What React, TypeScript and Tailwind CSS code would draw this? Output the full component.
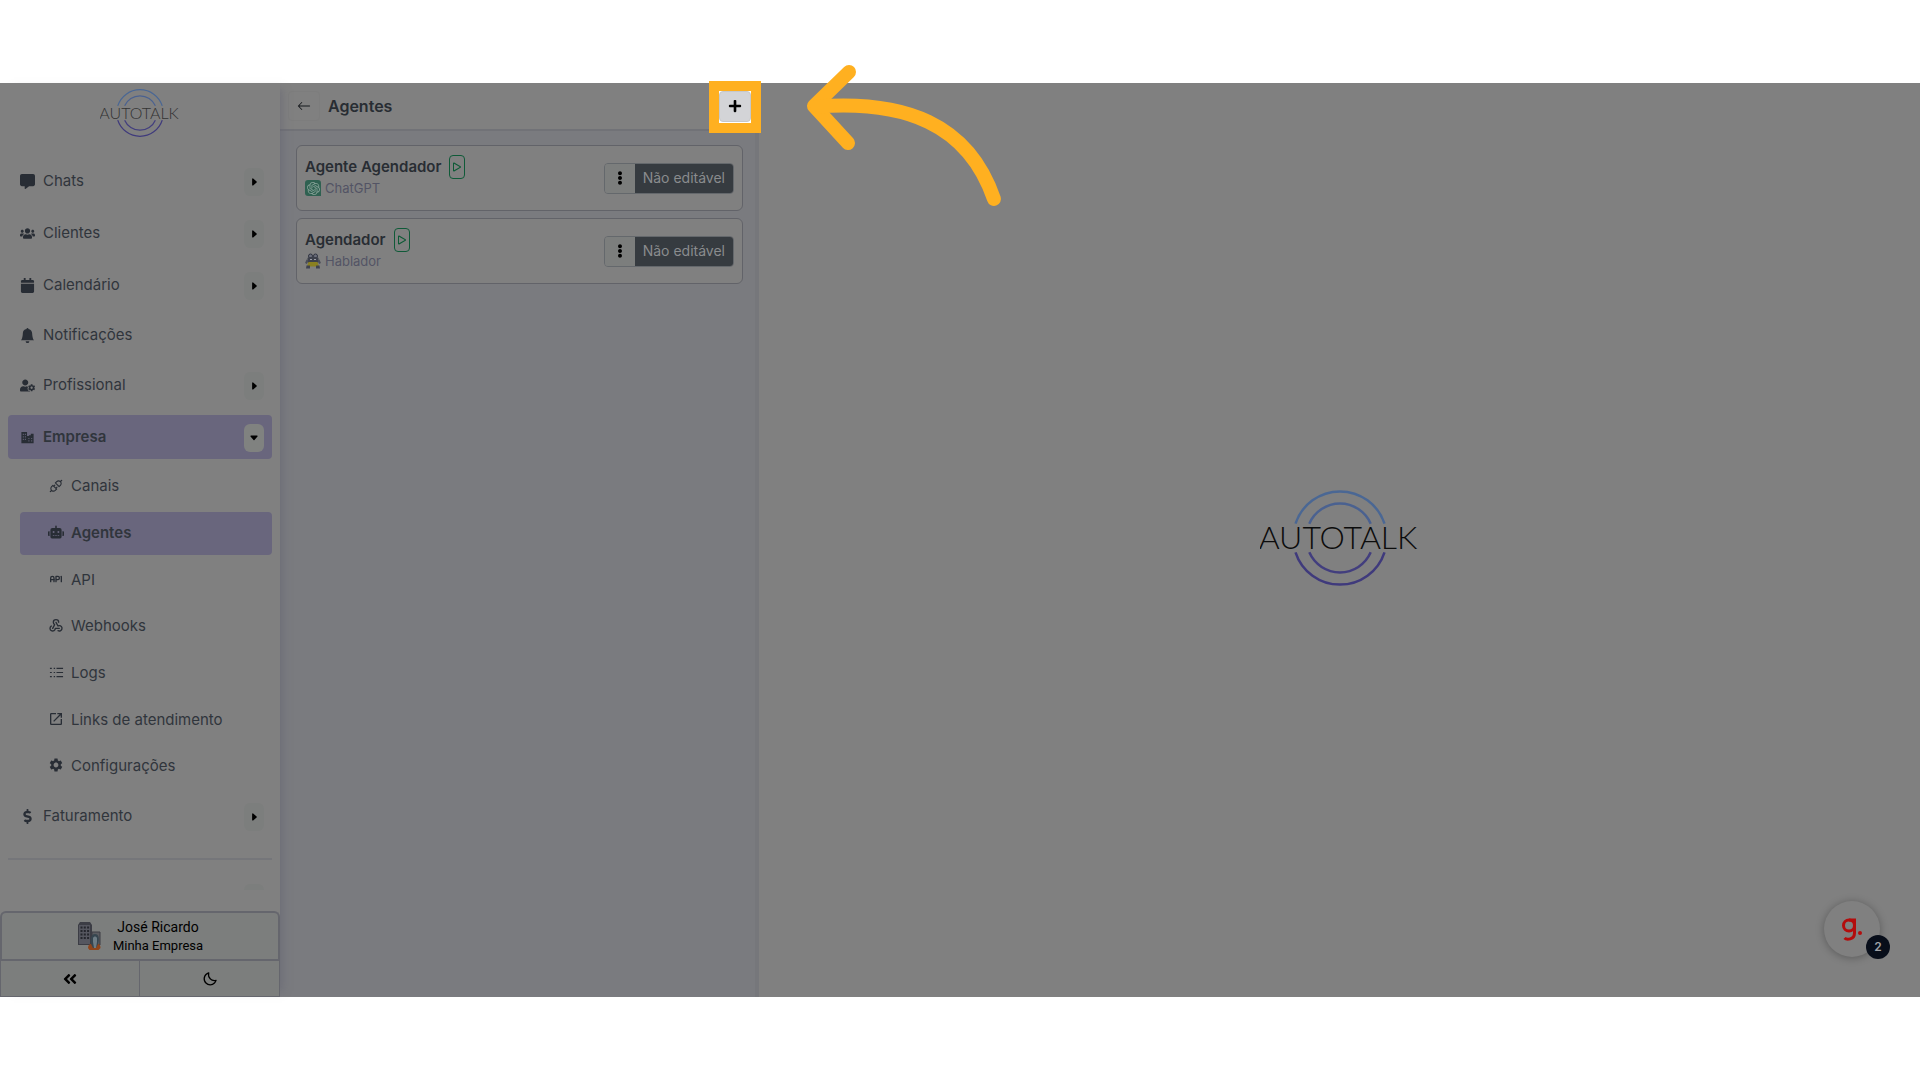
import type { ReactNode } from 'react';
import { BsArrowLeft, BsBellFill, BsCaretDownFill, BsCaretRightFill, BsPlay } from 'react-icons/bs';
import { FaAngleDoubleLeft, FaCalendar, FaDollarSign, FaEllipsisV, FaPlus, FaRobot, FaUserCog, FaUsers } from 'react-icons/fa';
import { FaMessage } from 'react-icons/fa6';
import { MdOutlineOpenInNew, MdSettings } from 'react-icons/md';
import { AiOutlineApi } from 'react-icons/ai';
import { BiMoon } from 'react-icons/bi';
import { TbApi, TbWebhook } from 'react-icons/tb';
import { SiOpenai } from 'react-icons/si';

type Item = { label: string; icon: ReactNode; arrow?: boolean };

const mainItems: Item[] = [
  { label: 'Chats', icon: <FaMessage />, arrow: true },
  { label: 'Clientes', icon: <FaUsers />, arrow: true },
  { label: 'Calendário', icon: <FaCalendar />, arrow: true },
  { label: 'Notificações', icon: <BsBellFill /> },
  { label: 'Profissional', icon: <FaUserCog />, arrow: true },
];

const companyItems: Item[] = [
  { label: 'Canais', icon: <AiOutlineApi /> },
  { label: 'Agentes', icon: <FaRobot /> },
  { label: 'API', icon: <TbApi /> },
  { label: 'Webhooks', icon: <TbWebhook /> },
  { label: 'Logs', icon: <ListIcon /> },
  { label: 'Links de atendimento', icon: <MdOutlineOpenInNew /> },
  { label: 'Configurações', icon: <MdSettings /> },
];

const agents = [
  { name: 'Agente Agendador', model: 'ChatGPT', avatar: <GptAvatar /> },
  { name: 'Agendador', model: 'Hablador', avatar: <RobotAvatar /> },
];

function ListIcon() {
  return (
    <svg viewBox="0 0 16 16" width="15" height="15" fill="none" stroke="currentColor" strokeWidth="1.3">
      <path d="M1 3.500h2M5 3.500h1.500M8 3.500h7M1 8h2M5 8h1.500M8 8h7M1 12.500h2M5 12.500h1.500M8 12.500h7" />
    </svg>
  );
}

function CompanyIcon() {
  return (
    <svg viewBox="0 0 16 16" width="15" height="15" fill="currentColor">
      <path fillRule="evenodd" d="M1.500 2h6v4.500h2V5.500h2V4h3v10h-13zM3 4v1.200h1V4zm2.200 0v1.200h1V4zM3 6.700v1.200h1V6.700zm2.200 0v1.200h1V6.700zM3 9.400v1.200h1V9.400zm2.200 0v1.200h1V9.400zM9 8.500v1.200h1V8.500zm3 0v1.200h1V8.500zM9 11v1.200h1V11zm3 0v1.200h1V11z" />
    </svg>
  );
}

function GptAvatar() {
  return (
    <span className="flex size-4 items-center justify-center rounded-[3px] rounded-br-none bg-[#2f6151] text-[13px] text-[#84a096]">
      <SiOpenai />
    </span>
  );
}

function RobotAvatar() {
  return (
    <svg viewBox="0 0 16 16" className="size-4" aria-hidden="true">
      <circle cx="5.500" cy="3" r="2" fill="#6c6f7c" stroke="#303440" />
      <circle cx="10.500" cy="3" r="2" fill="#6c6f7c" stroke="#303440" />
      <rect x="2.500" y="4" width="11" height="6" rx="1.500" fill="#3d404b" />
      <path d="M5 6.500h2M9 6.500h2" stroke="#9a9ca4" />
      <path d="M2.500 7 1 10.500M13.500 7 15 10.500" stroke="#4a4d58" strokeWidth="2" />
      <path d="M3.500 9h9l1.500 4.500H2z" fill="#8a8020" />
      <path d="M1.500 12.500h3.500v3H1zM11 12.500h3.500l.5 3h-4z" fill="#3f4250" />
    </svg>
  );
}

function CompanyAvatar() {
  return (
    <svg viewBox="0 0 24 30" width="24" height="30" aria-hidden="true">
      <path d="M1 4 3 1h10l2 3v20H1z" fill="#3c3d45" />
      <path d="M2 4h11v19H2z" fill="#55565f" />
      <path d="M3.500 6.500h9M3.500 10h9M3.500 13.500h9M3.500 17h9" stroke="#25262d" strokeWidth="2" strokeDasharray="2 1.300" />
      <path d="M15 11h8v13h-8z" fill="#5b5c61" stroke="#3c3d45" />
      <path d="M11 27c0-3 2-4 3.500-4.500h6c2 .5 3 2 3 4.500l-2 2h-9z" fill="#8f451c" />
      <path d="M14 23c-1-7 1-10 4-10s5 3 3 10l-2 4h-3z" fill="#36454f" />
      <path d="M16 17c1-2 3-2 4 0v4l-1 6h-2l-1-6z" fill="#6d7c85" />
    </svg>
  );
}

function Logo({ className, textColor }: { className: string; textColor: string }) {
  return (
    <svg viewBox="0 0 160 100" className={className} role="img" aria-label="Autotalk">
      <g fill="none" strokeWidth="2.500">
        <path d="M35.500 35.700A46.800 46.800 0 0 1 124.500 35.700" stroke="#4a6794" />
        <path d="M49.300 35.700A33.500 33.500 0 0 1 110.700 35.700" stroke="#4a6190" />
        <path d="M35.500 64.300A46.800 46.800 0 0 0 124.500 64.300" stroke="#3f3a7c" />
        <path d="M49.300 64.300A33.500 33.500 0 0 0 110.700 64.300" stroke="#423e7e" />
      </g>
      <text x="78" y="61" textAnchor="middle" fontFamily="Lato, sans-serif" fontWeight="300" fontSize="32" fill={textColor}>
        AUTOTALK
      </text>
    </svg>
  );
}

function MainItem({ item, active }: { item: Item; active?: boolean }) {
  return (
    <li className={`flex items-center rounded pl-3 pr-2 ${item.arrow ? 'h-11' : 'h-10'} ${active ? 'bg-[#69667d] font-semibold' : ''}`}>
      <a href="#" className="flex flex-1 items-center gap-2">
        <span className="flex w-[15px] justify-center text-[15px] text-[#282d35]">{item.icon}</span>
        {item.label}
      </a>
      {item.arrow && (
        <button
          aria-label={`Abrir ${item.label}`}
          className={`mt-0.5 flex h-7 w-5 items-center justify-center rounded-md text-[10px] text-black ${active ? 'bg-[#808280]' : 'bg-[#7c7e7d]'}`}
        >
          {active ? <BsCaretDownFill /> : <BsCaretRightFill />}
        </button>
      )}
    </li>
  );
}

function Sidebar() {
  return (
    <aside className="relative z-10 flex w-[280px] shrink-0 flex-col bg-[#808080] shadow-[8px_0_8px_-6px_#5f5f7080]">
      <div className="flex justify-center pt-1">
        <Logo className="h-[52px] w-20" textColor="#333333" />
      </div>
      <nav className="flex-1 px-2 pt-5 text-[15px] text-[#30353c]">
        <ul className="flex flex-col gap-2">
          {mainItems.map((item) => (
            <MainItem key={item.label} item={item} />
          ))}
          <MainItem item={{ label: 'Empresa', icon: <CompanyIcon />, arrow: true }} active />
        </ul>
        <ul className="my-1.5 flex h-[323px] flex-col justify-between pl-3">
          {companyItems.map((item) => {
            const active = item.label === 'Agentes';
            return (
              <li key={item.label} className={`rounded ${active ? 'bg-[#69667d] font-semibold' : ''}`}>
                <a href="#" className="flex h-[43px] items-center gap-[7px] pl-7">
                  <span className="flex w-4 justify-center pb-0.5 text-base text-[#282d35]">{item.icon}</span>
                  {item.label}
                </a>
              </li>
            );
          })}
        </ul>
        <ul>
          <MainItem item={{ label: 'Faturamento', icon: <FaDollarSign />, arrow: true }} />
        </ul>
        <hr className="mt-5 border-t-2 border-[#75767a]" />
        <div className="mt-6 mr-2 ml-auto h-1.5 w-5 rounded-t-md bg-[#7c7e7d]" />
      </nav>
      <div className="font-['Roboto',sans-serif] text-black">
        <button className="flex h-12 w-full items-center justify-center gap-3 rounded-t-md border-2 border-b-0 border-[#65666d] bg-[#7c7e7d]">
          <CompanyAvatar />
          <span className="flex flex-col text-center text-sm leading-5">
            José Ricardo
            <span className="text-[13px] leading-[18px]">Minha Empresa</span>
          </span>
        </button>
        <div className="grid h-[38px] grid-cols-2 divide-x divide-[#65666d] border-x border-t-2 border-b border-[#65666d] bg-[#7c7e7d]">
          <button aria-label="Recolher menu" className="flex items-center justify-center">
            <FaAngleDoubleLeft />
          </button>
          <button aria-label="Modo escuro" className="flex items-center justify-center">
            <BiMoon />
          </button>
        </div>
      </div>
    </aside>
  );
}

function AgentList() {
  return (
    <section className="flex w-[479px] shrink-0 flex-col border-r-4 border-[#76777b] bg-[#7a7b7f]">
      <header className="flex h-12 items-center border-b-2 border-[#717277] bg-[#808080] pl-2 pr-1">
        <button aria-label="Voltar" className="flex h-[30px] w-8 items-center justify-center rounded border border-[#7d7d7d] text-sm text-[#15181c]">
          <BsArrowLeft />
        </button>
        <h1 className="flex-1 pl-2 text-base font-semibold text-[#282d33]">Agentes</h1>
        <div className="relative z-20 mt-px h-8 w-8 bg-white ring-[10px] ring-[#ffb020]">
          <button aria-label="Novo agente" className="flex h-[31px] w-8 items-center justify-center rounded border border-[#c6c8ca] bg-[#d3d4d7] text-sm text-black">
            <FaPlus />
          </button>
          {/* seta de destaque */}
          <svg className="pointer-events-none absolute -top-7 left-[84px] h-[146px] w-[204px]" viewBox="0 0 204 146" fill="none" stroke="#ffb020" strokeWidth="14" strokeLinecap="round" strokeLinejoin="round">
            <path d="M46 9 11 43l34 37" />
            <path d="M14 43.500C101 37 165 60 191 136" />
          </svg>
        </div>
      </header>
      <ul className="flex flex-col gap-[7px] pt-3.5 pr-3 pl-4">
        {agents.map((agent) => (
          <li key={agent.name} className="flex h-[66px] w-full items-center justify-between rounded-md border border-[#626369] bg-[#808080] px-2">
            <div className="pb-1">
              <div className="flex items-center gap-2">
                <h2 className="text-[15px] font-semibold leading-5 text-[#282d33]">{agent.name}</h2>
                <button aria-label={`Testar ${agent.name}`} className="flex h-6 w-4 items-center justify-center rounded border border-[#0f5a38] text-base text-[#0c5a35]">
                  <BsPlay className="shrink-0" />
                </button>
              </div>
              <p className="flex items-center gap-1 text-[13px] leading-[18px] text-[#535465]">
                {agent.avatar}
                {agent.model}
              </p>
            </div>
            <div className="flex h-[31px] overflow-hidden rounded border border-[#64686c] text-sm">
              <button aria-label="Mais opções" className="flex w-[30px] items-center justify-center bg-[#7c7e7d] text-black">
                <FaEllipsisV />
              </button>
              <button className="bg-[#363b40] px-2 text-[#8a8c8e]">Não editável</button>
            </div>
          </li>
        ))}
      </ul>
    </section>
  );
}

function HelpWidget() {
  return (
    <button aria-label="Ajuda" className="absolute right-10 bottom-10 flex size-14 items-center justify-center rounded-full bg-[#808080] shadow-[0_1px_8px_#0000004d]">
      <svg viewBox="0 0 24 26" width="24" height="26" fill="none" stroke="#b30d0d" strokeWidth="3">
        <circle cx="9" cy="9.500" r="5.500" />
        <path d="M9 4h7M14.500 4v13c0 7-8 7-10 5" />
        <circle cx="20" cy="17" r="1" fill="#b30d0d" strokeWidth="2" />
      </svg>
      <span className="absolute -right-2.5 -bottom-0.5 flex size-6 items-center justify-center rounded-full bg-[#080e1a] text-xs font-semibold text-[#a0a2a6]">2</span>
    </button>
  );
}

export default function App() {
  return (
    <div className="flex min-h-screen flex-col bg-white py-[83px] font-['Inter',sans-serif]">
      <div className="flex flex-1 bg-[#808080]">
        <Sidebar />
        <AgentList />
        <main className="relative flex flex-1 items-center justify-center pb-1">
          <Logo className="h-[100px] w-40" textColor="#0c0c0c" />
          <HelpWidget />
        </main>
      </div>
    </div>
  );
}
